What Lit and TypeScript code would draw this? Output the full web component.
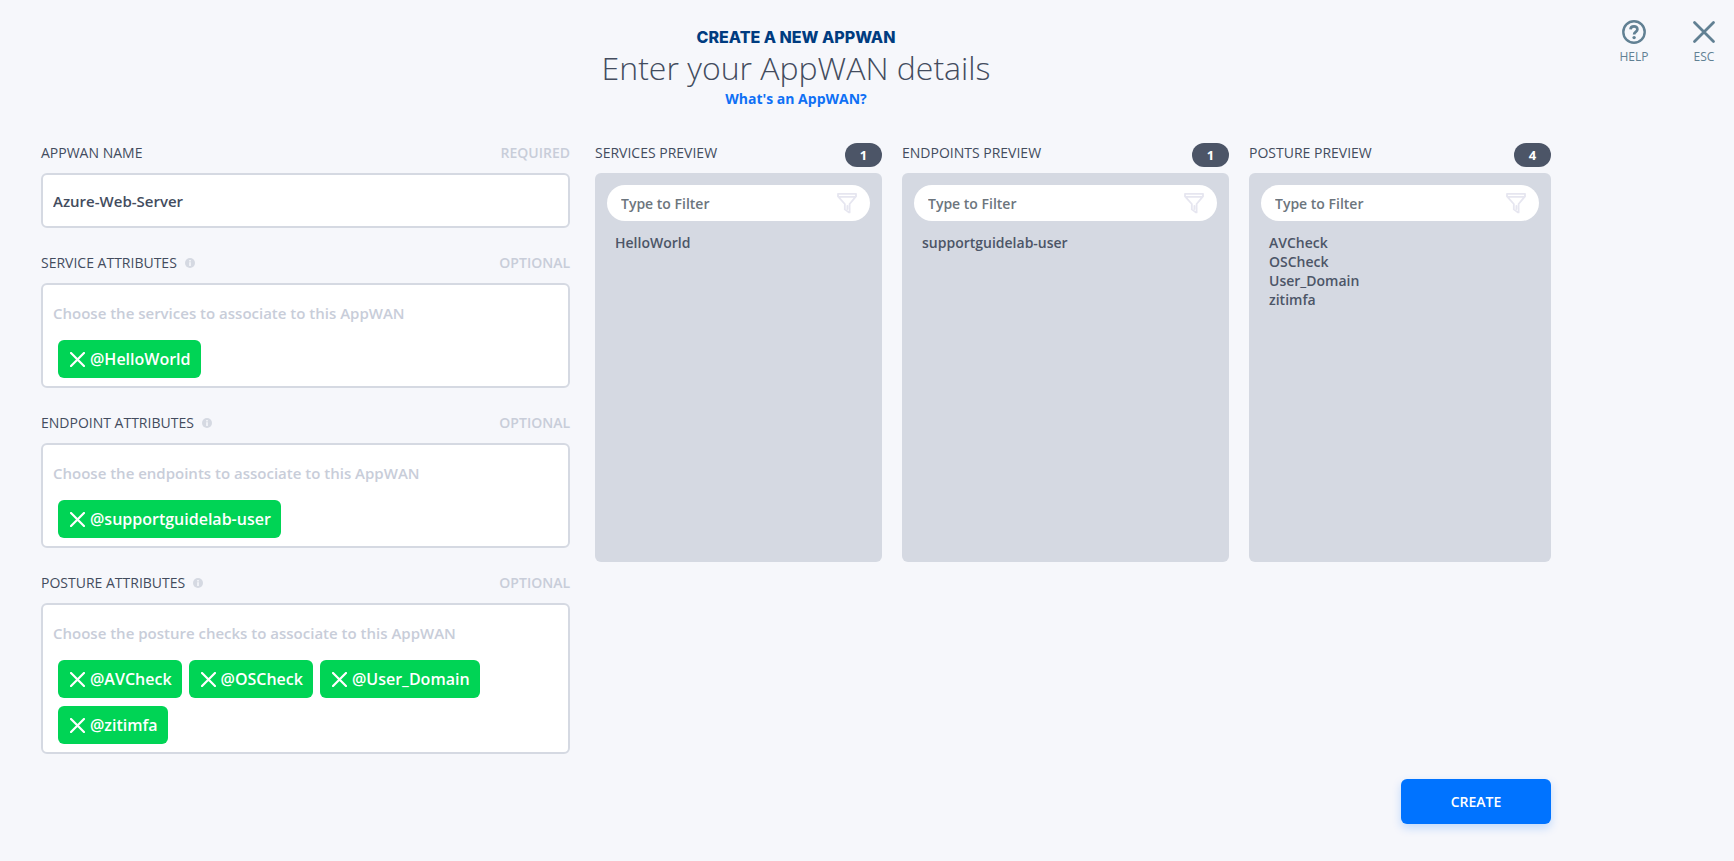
import { LitElement, html, css, svg } from "lit";
import { customElement, property, state } from "lit/decorators.js";

const cross = (width: number) => svg`
  <path d="M1.5 1.5 L20.5 20.5 M20.5 1.5 L1.5 20.5" fill="none" stroke="currentColor" stroke-width=${width} stroke-linecap="round"/>`;

const infoIcon = html`<svg class="info" viewBox="0 0 10 10" aria-hidden="true">
  <circle cx="5" cy="5" r="5" fill="#d5d9e2"/>
  <rect x="4.2" y="4.2" width="1.6" height="3.8" fill="#f6f7fb"/>
  <rect x="4.2" y="2" width="1.6" height="1.5" fill="#f6f7fb"/>
</svg>`;

@customElement("attribute-field")
export class AttributeField extends LitElement {
  @property() name = "";
  @property() label = "";
  @property() placeholder = "";
  @property({ attribute: false }) tags: string[] = [];

  static styles = css`
    :host { display: block; }
    .head { display: flex; align-items: flex-start; height: 24px; margin-bottom: 6px; line-height: 20px; font-size: 14px; }
    .head label { flex: none; }
    .info { width: 10px; height: 10px; margin: 5px 0 0 8px; }
    .hint { margin-left: auto; font-weight: 600; color: #c8cdd9; }
    .box { padding: 5px 8px 8px 10px; border: 2px solid #d5d9e2; border-radius: 6px; background: #fff; }
    .entry { display: block; box-sizing: border-box; width: 100%; height: 46px; padding: 0; border: 0; outline: 0; background: transparent; font: 600 15px/20px "Open Sans", sans-serif; color: #434c5e; }
    .entry::placeholder { color: #c8cdd9; opacity: 1; }
    .tags { display: flex; flex-wrap: wrap; gap: 8px 7px; margin: 4px 0 0 5px; padding: 0; list-style: none; }
    .tag { display: flex; align-items: center; gap: 5px; height: 38px; box-sizing: border-box; padding: 0 10px 0 12px; border-radius: 6px; background: #00d455; color: #fff; font-size: 16px; font-weight: 600; line-height: 20px; }
    .remove { display: flex; padding: 0; border: 0; background: none; color: inherit; cursor: pointer; }
    .remove svg { width: 15px; height: 15px; }
  `;

  private remove(tag: string) {
    this.tags = this.tags.filter((t) => t !== tag);
  }

  render() {
    return html`
      <div class="head">
        <label for="entry">${this.label}</label>${infoIcon}
        <span class="hint">OPTIONAL</span>
      </div>
      <div class="box">
        <input id="entry" class="entry" type="text" name=${this.name} placeholder=${this.placeholder} />
        <ul class="tags">
          ${this.tags.map((tag) => html`
            <li class="tag">
              <button class="remove" type="button" aria-label="Remove ${tag}" @click=${() => this.remove(tag)}>
                <svg viewBox="0 0 22 22" aria-hidden="true">${cross(3.2)}</svg>
              </button>
              <span>@${tag}</span>
            </li>`)}
        </ul>
      </div>`;
  }
}

@customElement("preview-panel")
export class PreviewPanel extends LitElement {
  @property() label = "";
  @property({ attribute: false }) items: string[] = [];
  @state() private query = "";

  static styles = css`
    :host { display: block; min-width: 0; }
    .head { display: flex; align-items: flex-start; justify-content: space-between; height: 24px; margin: 0 0 6px; font-size: 14px; line-height: 20px; }
    .title { margin: 0; font-size: inherit; font-weight: 400; white-space: nowrap; }
    .count { box-sizing: border-box; min-width: 37px; height: 24px; border-radius: 12px; background: #4c5567; color: #fff; font-size: 13px; font-weight: 700; line-height: 24px; text-align: center; }
    .body { box-sizing: border-box; min-height: 389px; padding: 12px; border-radius: 6px; background: #d5d9e2; }
    .filter { display: flex; align-items: center; height: 36px; box-sizing: border-box; padding: 0 12px 0 14px; border-radius: 18px; background: #fff; }
    .filter input { flex: 1; min-width: 0; padding: 2px 0 0; border: 0; outline: 0; background: transparent; font: 600 14px/20px "Open Sans", sans-serif; color: #434c5e; }
    .filter input::placeholder { color: #6c757d; opacity: 1; }
    .funnel { flex: none; width: 22px; height: 22px; }
    .list { margin: 12px 0 0 8px; padding: 0; list-style: none; font-size: 14px; line-height: 19px; font-weight: 600; color: #4c5567; }
  `;

  render() {
    const shown = this.items.filter((i) => i.toLowerCase().includes(this.query.toLowerCase()));
    return html`
      <div class="head">
        <h2 class="title">${this.label}</h2>
        <span class="count">${this.items.length}</span>
      </div>
      <div class="body">
        <div class="filter">
          <input type="text" aria-label="Filter ${this.label}" placeholder="Type to Filter"
            @input=${(e: Event) => (this.query = (e.target as HTMLInputElement).value)} />
          <svg class="funnel" viewBox="0 0 22 22" fill="none" stroke="#e6e6f0" stroke-width="1.8" stroke-linejoin="round" stroke-linecap="round" aria-hidden="true">
            <path d="M2 1.8 H20 V4.4 L13.6 12 V20.4 L12.8 20.4 L8.8 17.4 V12 L2 4.4 Z M2.4 4.8 H19.6 M11.4 14 V17"/>
          </svg>
        </div>
        <ul class="list">${shown.map((i) => html`<li>${i}</li>`)}</ul>
      </div>`;
  }
}

@customElement("app-root")
export class AppRoot extends LitElement {
  static styles = css`
    :host { display: block; min-height: 100vh; background: #f6f7fb; color: #434c5e; font-family: "Open Sans", sans-serif; font-size: 14px; }
    .page { display: grid; grid-template-columns: minmax(0, 1fr) 183px; padding-left: 41px; }
    .intro { display: flex; flex-direction: column; align-items: center; padding: 26px 0 34px; text-align: center; }
    .kicker { margin: 0; font-family: "Inter", sans-serif; font-size: 16px; line-height: 22px; font-weight: 800; color: #003c80; }
    .heading { margin: 0; font-size: 32px; line-height: 40px; font-weight: 300; }
    .more { font-size: 14px; line-height: 21px; font-weight: 700; color: #0f70f5; text-decoration: none; }
    .columns { display: grid; grid-template-columns: 529fr 956fr; gap: 25px; align-items: start; }
    .fields { display: grid; gap: 25px; min-width: 0; }
    .head { display: flex; align-items: flex-start; justify-content: space-between; height: 24px; margin-bottom: 6px; line-height: 20px; }
    .hint { font-weight: 600; color: #c8cdd9; }
    .name { display: block; box-sizing: border-box; width: 100%; height: 55px; padding: 0 10px; border: 2px solid #d5d9e2; border-radius: 6px; outline: 0; background: #fff; color: #434c5e; font: 600 15px/20px "Open Sans", sans-serif; }
    .previews { display: grid; grid-template-columns: 287fr 327fr 302fr; gap: 20px; }
    .submit { display: flex; justify-content: flex-end; padding: 25px 0 37px; }
    .create { width: 150px; height: 45px; padding: 0; border: 0; border-radius: 6px; background: #0073ff; color: #fff; font: 600 14px/20px "Open Sans", sans-serif; box-shadow: 0 4px 10px rgba(0, 115, 255, 0.22); cursor: pointer; }
    .actions { display: flex; justify-content: flex-end; align-items: flex-start; gap: 20px; padding: 20px 5px 0 0; }
    .action { display: flex; flex-direction: column; align-items: center; gap: 4px; width: 50px; padding: 0; border: 0; background: none; color: #618093; font: 400 12px/18px "Open Sans", sans-serif; cursor: pointer; }
    .action svg { width: 24px; height: 24px; }
  `;

  render() {
    return html`
      <div class="page">
        <main>
          <header class="intro">
            <p class="kicker">CREATE A NEW APPWAN</p>
            <h1 class="heading">Enter your AppWAN details</h1>
            <a class="more" href="#about">What's an AppWAN?</a>
          </header>
          <form @submit=${(e: Event) => e.preventDefault()}>
            <div class="columns">
              <div class="fields">
                <div>
                  <div class="head">
                    <label for="name">APPWAN NAME</label>
                    <span class="hint">REQUIRED</span>
                  </div>
                  <input id="name" class="name" type="text" required value="Azure-Web-Server" />
                </div>
                <attribute-field name="services" label="SERVICE ATTRIBUTES"
                  placeholder="Choose the services to associate to this AppWAN"
                  .tags=${["HelloWorld"]}></attribute-field>
                <attribute-field name="endpoints" label="ENDPOINT ATTRIBUTES"
                  placeholder="Choose the endpoints to associate to this AppWAN"
                  .tags=${["supportguidelab-user"]}></attribute-field>
                <attribute-field name="postures" label="POSTURE ATTRIBUTES"
                  placeholder="Choose the posture checks to associate to this AppWAN"
                  .tags=${["AVCheck", "OSCheck", "User_Domain", "zitimfa"]}></attribute-field>
              </div>
              <div class="previews">
                <preview-panel label="SERVICES PREVIEW" .items=${["HelloWorld"]}></preview-panel>
                <preview-panel label="ENDPOINTS PREVIEW" .items=${["supportguidelab-user"]}></preview-panel>
                <preview-panel label="POSTURE PREVIEW" .items=${["AVCheck", "OSCheck", "User_Domain", "zitimfa"]}></preview-panel>
              </div>
            </div>
            <div class="submit"><button class="create" type="submit">CREATE</button></div>
          </form>
        </main>
        <nav class="actions" aria-label="Page actions">
          <button class="action" type="button">
            <svg viewBox="0 0 24 24" fill="none" stroke="currentColor" aria-hidden="true">
              <circle cx="12" cy="12" r="10.7" stroke-width="2.4"/>
              <path d="M8.5 9.4 C8.7 5.2 15.6 5.4 15.4 9.4 C15.3 12 12.1 11.8 12.1 14.6" stroke-width="2.7"/>
              <circle cx="12.1" cy="17.6" r="1.7" fill="currentColor" stroke="none"/>
            </svg>HELP
          </button>
          <button class="action" type="button">
            <svg viewBox="-1 -1 24 24" aria-hidden="true">${cross(2.8)}</svg>ESC
          </button>
        </nav>
      </div>`;
  }
}
